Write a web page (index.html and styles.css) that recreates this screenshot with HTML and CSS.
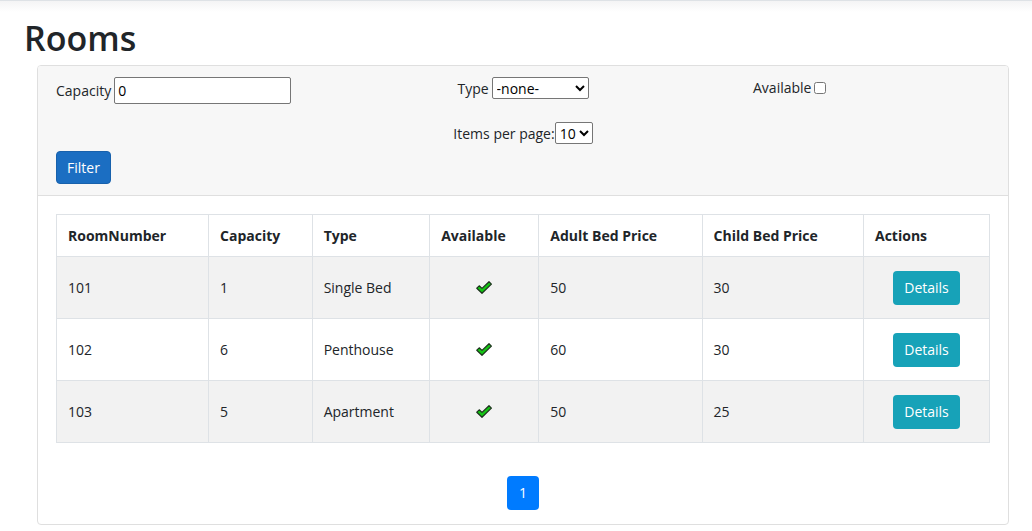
FILE: index.html
```html
<!DOCTYPE html>
<html lang="en">
<head>
<meta charset="utf-8">
<title>Rooms</title>
<link rel="stylesheet" href="styles.css">
</head>
<body>
<svg class="sprite" aria-hidden="true">
  <symbol id="check" viewBox="0 0 16 13">
    <path d="M.8 7.2 3.2 4.8 6 7.4 13 .7 15.4 3.1 6 12.3Z" fill="#14c414" stroke="#1c301c" stroke-width="1.2" stroke-linejoin="round"/>
  </symbol>
</svg>
<div class="topline"></div>
<main class="page">
  <h1 class="title">Rooms</h1>
  <section class="card">
    <form class="filters">
      <div class="fields">
        <div class="field"><label for="capacity">Capacity</label><input class="control number" id="capacity" type="text" value="0"></div>
        <div class="field center"><label for="type">Type</label><select class="control type" id="type"><option>-none-</option></select></div>
        <div class="field"><label for="available">Available</label><input class="tick" id="available" type="checkbox"></div>
      </div>
      <div class="field center tight"><label for="items">Items per page:</label><select class="control items" id="items"><option>10</option></select></div>
      <button class="btn filter" type="button">Filter</button>
    </form>
    <div class="content">
      <table class="rooms">
        <colgroup><col class="c-room"><col class="c-cap"><col class="c-type"><col class="c-avail"><col class="c-adult"><col class="c-child"><col class="c-act"></colgroup>
        <thead>
          <tr><th>RoomNumber</th><th>Capacity</th><th>Type</th><th>Available</th><th>Adult Bed Price</th><th>Child Bed Price</th><th>Actions</th></tr>
        </thead>
        <tbody>
          <tr><td>101</td><td>1</td><td>Single Bed</td><td class="mid"><svg class="check" role="img" aria-label="Yes"><use href="#check"/></svg></td><td>50</td><td>30</td><td class="mid"><a class="btn details" href="#">Details</a></td></tr>
          <tr><td>102</td><td>6</td><td>Penthouse</td><td class="mid"><svg class="check" role="img" aria-label="Yes"><use href="#check"/></svg></td><td>60</td><td>30</td><td class="mid"><a class="btn details" href="#">Details</a></td></tr>
          <tr><td>103</td><td>5</td><td>Apartment</td><td class="mid"><svg class="check" role="img" aria-label="Yes"><use href="#check"/></svg></td><td>50</td><td>25</td><td class="mid"><a class="btn details" href="#">Details</a></td></tr>
        </tbody>
      </table>
      <nav class="pages"><a class="btn current" href="#">1</a></nav>
    </div>
  </section>
</main>
</body>
</html>
```
FILE: styles.css
```css
* { box-sizing: border-box; }
body {
  margin: 0;
  background: #fff;
  color: #212529;
  font: 14px/21px "Segoe UI", "Open Sans", "Noto Sans", sans-serif;
}
.sprite { display: none; }
.topline {
  height: 12px;
  border-top: 1px solid #dee2e6;
  background: linear-gradient(#f4f4f5, #fff);
}
.page { padding: 5px 23px 6px 24px; }
.title { margin: 0; font-size: 34px; line-height: 42px; font-weight: 600; }
.card {
  margin: 6px 0 0 13px;
  border: 1px solid #dfdfdf;
  border-radius: 4px;
  overflow: hidden;
}
.filters {
  padding: 11px 18px;
  background: #f7f7f7;
  border-bottom: 1px solid #dfdfdf;
}
.fields {
  display: grid;
  grid-template-columns: 237fr 460fr 237fr;
  align-items: start;
  margin-bottom: 18px;
}
.field { display: flex; align-items: center; gap: 3px; }
.center { justify-content: center; }
.tight { gap: 0; }
.control {
  font: inherit;
  color: #000;
  background-color: #fff;
  border: 1px solid #767676;
  border-radius: 2px;
  margin: 0;
}
.number { width: 177px; height: 27px; padding: 1px 3px; }
.type { width: 97px; height: 22px; padding: 0; }
.items { width: 38px; height: 22px; padding: 0; }
.tick { width: 12px; height: 12px; margin: 0; }
.btn {
  display: inline-block;
  padding: 5px 10px;
  border: 1px solid transparent;
  border-radius: 4px;
  color: #fff;
  font: inherit;
  text-decoration: none;
}
.filter {
  display: block;
  margin-top: 7px;
  background: #1b6ec2;
  border-color: #1861ac;
}
.content { padding: 18px 18px 14px; }
.rooms { width: 100%; border-collapse: collapse; table-layout: fixed; }
.rooms th, .rooms td {
  height: 62px;
  padding: 0 11px;
  border: 1px solid #dee2e6;
  text-align: left;
  vertical-align: middle;
}
.rooms th { height: 42px; font-weight: 700; }
.rooms tbody tr:nth-child(odd) { background: #f2f2f2; }
.rooms .mid { text-align: center; }
.c-room { width: 16.3%; }
.c-cap { width: 11.1%; }
.c-type { width: 12.6%; }
.c-avail { width: 11.7%; }
.c-adult { width: 17.5%; }
.c-child { width: 17.3%; }
.c-act { width: 13.5%; }
.check { display: block; width: 16px; height: 13px; margin: 0 auto; }
.details, .current { line-height: 22px; }
.details { background: #17a2b8; }
.pages { display: flex; justify-content: center; margin-top: 33px; }
.current { padding: 5px 11px; background: #007bff; }
```
